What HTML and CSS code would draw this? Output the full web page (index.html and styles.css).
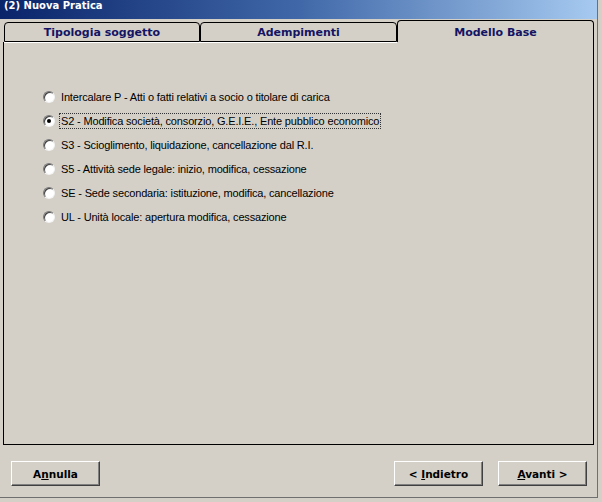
FILE: index.html
```html
<!DOCTYPE html>
<html lang="it">
<head>
<meta charset="utf-8">
<title>(2) Nuova Pratica</title>
<link rel="stylesheet" href="styles.css">
</head>
<body>
<div class="window">
  <div class="titlebar">(2) Nuova Pratica</div>
  <div class="tabs">
    <div class="tab">Tipologia soggetto</div>
    <div class="tab">Adempimenti</div>
    <div class="tab active">Modello Base</div>
  </div>
  <div class="panel">
    <ul class="options">
      <li class="option"><span class="radio"></span><span class="label">Intercalare P - Atti o fatti relativi a socio o titolare di carica</span></li>
      <li class="option"><span class="radio checked"></span><span class="label focus">S2 - Modifica società, consorzio, G.E.I.E., Ente pubblico economico</span></li>
      <li class="option"><span class="radio"></span><span class="label">S3 - Scioglimento, liquidazione, cancellazione dal R.I.</span></li>
      <li class="option"><span class="radio"></span><span class="label">S5 - Attività sede legale: inizio, modifica, cessazione</span></li>
      <li class="option"><span class="radio"></span><span class="label">SE - Sede secondaria: istituzione, modifica, cancellazione</span></li>
      <li class="option"><span class="radio"></span><span class="label">UL - Unità locale: apertura modifica, cessazione</span></li>
    </ul>
  </div>
  <div class="buttons">
    <button class="btn">A<u>n</u>nulla</button>
    <span class="spacer"></span>
    <button class="btn">&lt; <u>I</u>ndietro</button>
    <button class="btn"><u>A</u>vanti &gt;</button>
  </div>
</div>
</body>
</html>
```
FILE: styles.css
```css
html, body {
  margin: 0;
  padding: 0;
  background: #d4d0c8;
}
body {
  width: 602px;
  height: 502px;
  overflow: hidden;
}
.window {
  width: 598px;
  height: 498px;
  box-sizing: border-box;
  border-right: 1px solid #6f6f6f;
  border-bottom: 1px solid #6f6f6f;
  display: flex;
  flex-direction: column;
  background: #d4d0c8;
}
.titlebar {
  height: 19px;
  line-height: 19px;
  padding-left: 4px;
  background: linear-gradient(to right, #0a246a 0%, #4068a8 50%, #a6caf0 100%);
  color: #fff;
  font: bold 10px "DejaVu Sans", sans-serif;
  flex: none;
}
.tabs {
  display: flex;
  align-items: flex-end;
  height: 22px;
  margin-top: 1px;
  padding-left: 4px;
  padding-right: 3px;
  flex: none;
}
.tab {
  width: 196px;
  height: 20px;
  box-sizing: border-box;
  border: 1px solid #000;
  border-radius: 4px 4px 0 0;
  box-shadow: 0 1px 0 #fff;
  text-align: center;
  font: bold 11px/19px "DejaVu Sans", sans-serif;
  color: #141464;
}
.tab + .tab {
  width: 197px;
}
.tab.active {
  height: 22px;
  border-bottom: none;
  box-shadow: none;
  line-height: 23px;
}
.panel {
  height: 403px;
  margin-left: 3px;
  width: 591px;
  box-sizing: border-box;
  border-left: 1px solid #000;
  border-right: 1px solid #000;
  border-bottom: 1px solid #000;
  flex: none;
  padding-top: 47px;
}
.options {
  list-style: none;
  margin: 0;
  padding: 0 0 0 39px;
  display: flex;
  flex-direction: column;
  gap: 8px;
}
.option {
  display: flex;
  align-items: center;
  height: 16px;
  font: 11px "Liberation Sans", Arial, sans-serif;
  letter-spacing: -0.16px;
  color: #000;
}
.radio {
  width: 12px;
  height: 12px;
  box-sizing: border-box;
  border-radius: 50%;
  background: radial-gradient(circle at 60% 60%, #ffffff 0 45%, #eeeeee 70%, #c8c8c8 100%);
  border: 1px solid;
  border-color: #7a7a7a #f4f4f4 #f4f4f4 #7a7a7a;
  box-shadow: inset 1px 1px 0 #404040;
  margin-right: 4px;
  position: relative;
  flex: none;
}
.radio.checked::after {
  content: "";
  position: absolute;
  left: 3px;
  top: 3px;
  width: 4px;
  height: 4px;
  border-radius: 50%;
  background: #000;
}
.label {
  padding: 1px 1px;
  border: 1px solid transparent;
  white-space: nowrap;
}
.label.focus {
  border: 1px dotted #333;
}
.buttons {
  display: flex;
  padding: 16px 10px 0 11px;
  gap: 15px;
}
.spacer {
  flex: 1;
}
.btn {
  width: 89px;
  height: 25px;
  box-sizing: border-box;
  background: #d4d0c8;
  border: 1px solid;
  border-color: #fff #404040 #404040 #fff;
  box-shadow: inset -1px -1px 0 #808080;
  font: bold 10.5px "DejaVu Sans", sans-serif;
  color: #000;
  padding: 0;
  margin: 0;
}
```
